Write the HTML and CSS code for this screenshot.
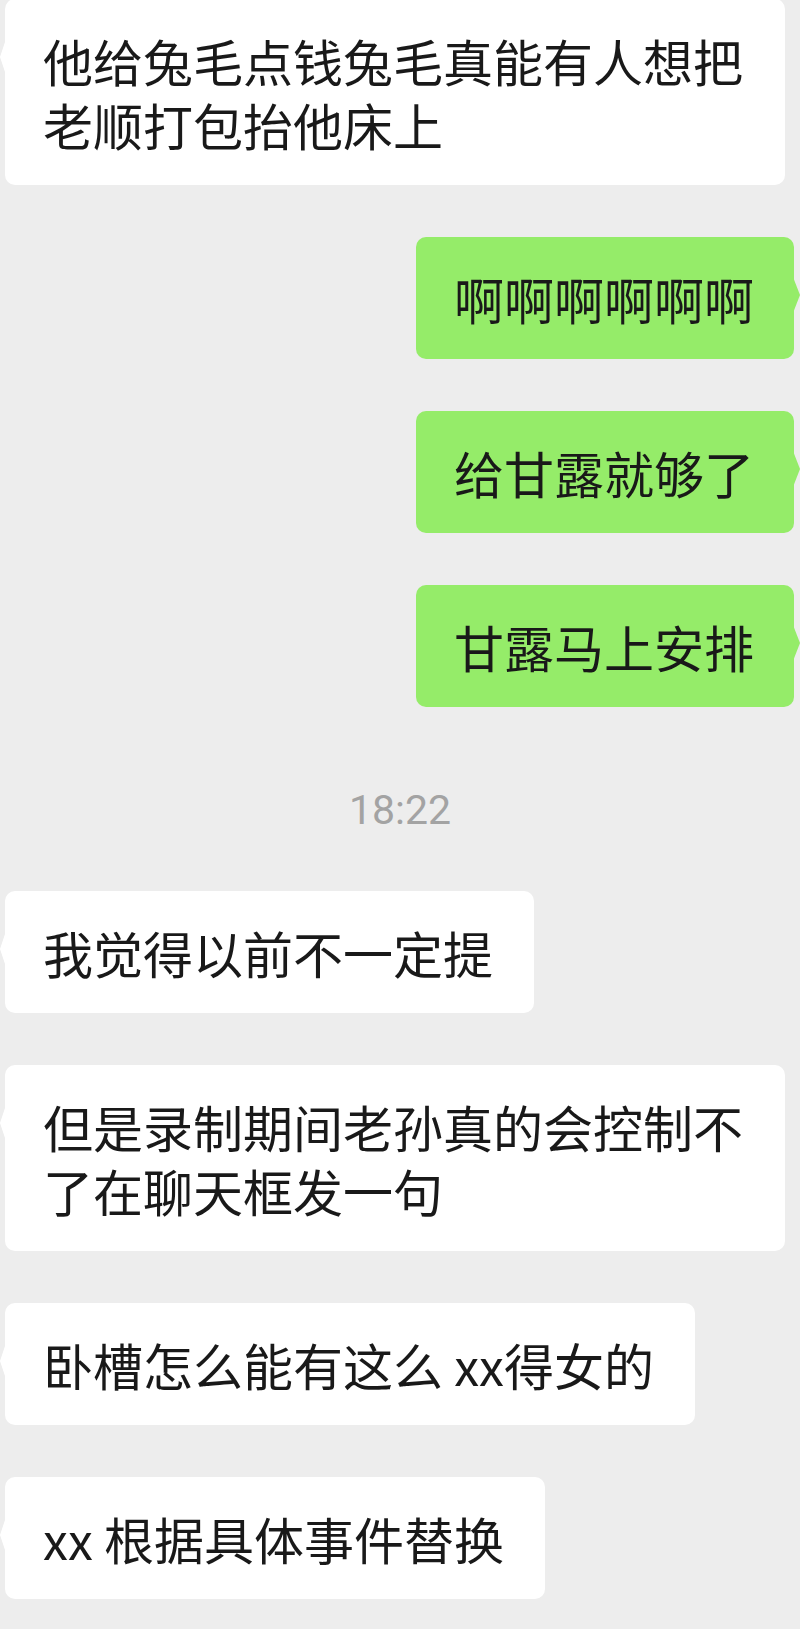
FILE: index.html
```html
<!DOCTYPE html>
<html lang="zh-CN">
<head>
  <meta charset="UTF-8">
  <meta name="viewport" content="width=device-width, initial-scale=1.0">
  <title>聊天记录</title>
  <link rel="stylesheet" href="styles.css">
</head>
<body>
  <div class="chat">
    <div class="msg msg-in first">
      <div class="bubble">他给兔毛点钱兔毛真能有人想把老顺打包抬他床上</div>
    </div>
    <div class="msg msg-out">
      <div class="bubble">啊啊啊啊啊啊</div>
    </div>
    <div class="msg msg-out">
      <div class="bubble">给甘露就够了</div>
    </div>
    <div class="msg msg-out">
      <div class="bubble">甘露马上安排</div>
    </div>
    <div class="time">18:22</div>
    <div class="msg msg-in">
      <div class="bubble">我觉得以前不一定提</div>
    </div>
    <div class="msg msg-in">
      <div class="bubble">但是录制期间老孙真的会控制不了在聊天框发一句</div>
    </div>
    <div class="msg msg-in">
      <div class="bubble">卧槽怎么能有这么 xx得女的</div>
    </div>
    <div class="msg msg-in">
      <div class="bubble">xx 根据具体事件替换</div>
    </div>
  </div>
</body>
</html>
```

FILE: styles.css
```css
body {
  margin: 0;
  padding: 0;
  background-color: #ededed;
  font-family: "Noto Sans CJK SC", "Noto Sans", sans-serif;
  color: #191919;
}
.chat {
  display: flex;
  flex-direction: column;
  gap: 52px;
  padding-bottom: 30px;
}
.msg {
  display: flex;
}
.msg.first {
  margin-top: -1px;
}
.msg-in {
  justify-content: flex-start;
  padding-left: 5px;
}
.msg-out {
  justify-content: flex-end;
  padding-right: 6px;
}
.bubble {
  position: relative;
  box-sizing: border-box;
  max-width: 780px;
  padding: 29px 41px 29px 38px;
  font-size: 50px;
  line-height: 64px;
  border-radius: 10px;
  background-color: white;
  word-break: break-all;
}
.msg-out .bubble {
  background-color: #95ec69;
  padding: 29px 40px 29px 38px;
}
.bubble::before {
  content: "";
  position: absolute;
  top: 40px;
  width: 0;
  height: 0;
  border-top: 18px solid transparent;
  border-bottom: 18px solid transparent;
}
.msg-in .bubble::before {
  left: -5px;
  border-right: 6px solid white;
}
.msg-out .bubble::before {
  right: -6px;
  border-left: 7px solid #95ec69;
}
.time {
  padding-top: 30px;
  padding-bottom: 8px;
  text-align: center;
  font-family: Roboto, "Liberation Sans", sans-serif;
  font-size: 41px;
  line-height: 42px;
  color: #a3a3a3;
}
```
